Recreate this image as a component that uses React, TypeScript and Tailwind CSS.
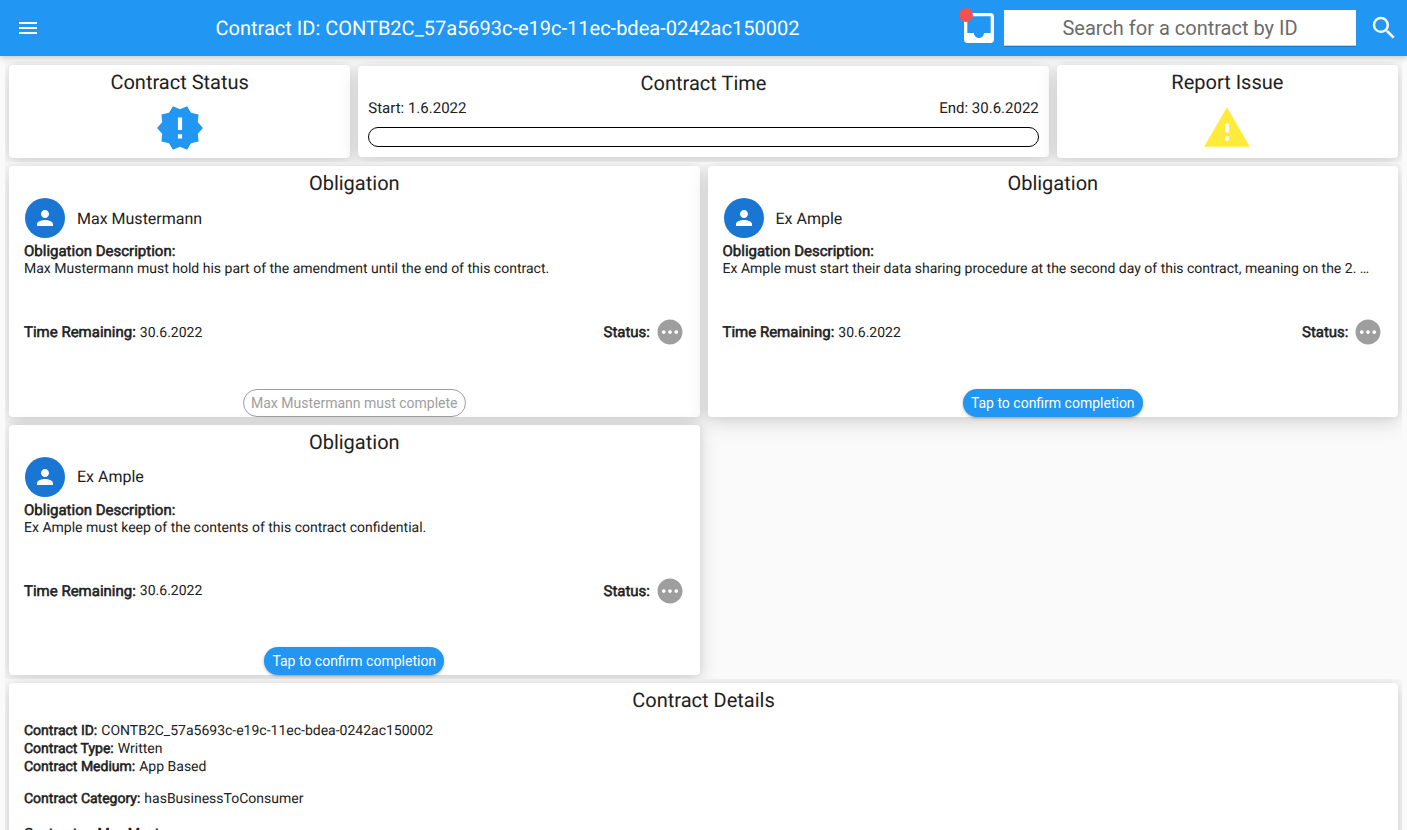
import type { ReactNode } from "react";
import { MdMenu, MdNewReleases, MdPerson, MdPending, MdSearch } from "react-icons/md";

const SHADOW = "shadow-[0_6px_20px_1px_rgba(0,0,0,0.13),0_0_8px_1px_rgba(0,0,0,0.07)]";

function Card({ className = "m-1", children }: { className?: string; children: ReactNode }) {
  return <section className={`rounded-[4px] bg-white ${SHADOW} ${className}`}>{children}</section>;
}

function Title({ children }: { children: ReactNode }) {
  return <h2 className="text-center text-[20px] leading-[24px]">{children}</h2>;
}

function Label({ large, children }: { large?: boolean; children: ReactNode }) {
  return (
    <span className={`[-webkit-text-stroke:0.55px_#212121] ${large ? "text-[15px]" : "text-[14px]"}`}>{children}</span>
  );
}

function Obligation({ name, text, waiting }: { name: string; text: string; waiting?: boolean }) {
  return (
    <Card className="m-1 flex h-[250.6px] flex-col">
      <div className="pt-[5px]">
        <Title>Obligation</Title>
      </div>
      <div className="mt-[3px] flex h-10 items-center gap-3 pl-4">
        <div className="flex size-10 items-center justify-center rounded-full bg-[#1976d2] text-white">
          <MdPerson size={24} />
        </div>
        <span className="pt-px text-[16px]">{name}</span>
      </div>
      <div className="mt-1 h-[70px] px-[15px] leading-[18px]">
        <div className="h-[18px]">
          <Label large>Obligation Description:</Label>
        </div>
        <p className="truncate text-[14px]">{text}</p>
      </div>
      <div className="mt-[5.4px] flex h-[30px] items-center pr-[15px] pl-[15px]">
        <Label large>Time Remaining:</Label>
        <span className="ml-1 pt-[2px] text-[14px]">30.6.2022</span>
        <span className="mr-[4.5px] ml-auto">
          <Label large>Status:</Label>
        </span>
        <MdPending size={30} className="text-[#9e9e9e]" />
      </div>
      <div className="mt-auto flex justify-center">
        {waiting ? (
          <button className="h-7 w-[223px] rounded-full border border-[#9e9e9e] pt-px text-[14px] leading-[25px] text-[#9e9e9e]">
            Max Mustermann must complete
          </button>
        ) : (
          <button className="h-7 w-[180px] rounded-full bg-[#2196f3] pt-px text-[14px] leading-[27px] text-white shadow-[0_1px_3px_rgba(0,0,0,0.3)]">
            Tap to confirm completion
          </button>
        )}
      </div>
    </Card>
  );
}

function Detail({ label, children }: { label: string; children: ReactNode }) {
  return (
    <div className="flex h-[18px] items-center gap-1">
      <Label>{label}</Label>
      <span className="text-[14px]">{children}</span>
    </div>
  );
}

export default function App() {
  return (
    <div className="flex h-[830px] flex-col overflow-hidden bg-[#fafafa] font-[Roboto,sans-serif] text-[#212121] [text-rendering:geometricPrecision]">
      <header className="relative z-10 flex h-14 shrink-0 items-center bg-[#2196f3] pl-4 text-white shadow-[0_2px_6px_rgba(0,0,0,0.2)]">
        <MdMenu size={24} className="shrink-0" />
        <h1 className="w-[919px] pl-4 text-center text-[20px]">
          Contract ID: CONTB2C_57a5693c-e19c-11ec-bdea-0242ac150002
        </h1>
        <div className="relative size-10 shrink-0">
          <svg viewBox="0 0 24 24" className="size-10" fill="currentColor">
            <path d="M19 3H4.99c-1.11 0-1.98.89-1.98 2L3 19c0 1.1.88 2 1.99 2H19c1.1 0 2-.9 2-2V5c0-1.11-.9-2-2-2zm0 12h-4c0 1.66-1.35 3-3 3s-3-1.34-3-3H4.99V5H19v10z" />
          </svg>
          <span className="absolute top-0 left-0 size-3.5 rounded-full bg-[#ef5350]" />
        </div>
        <input
          className="ml-[5px] h-9 w-[352px] shrink-0 border-b border-[#cfcfcf] bg-white text-center text-[20px] shadow-[0_1px_0_#1c79c3] outline-none placeholder:text-[#6b6b6b]"
          placeholder="Search for a contract by ID"
        />
        <MdSearch size={30} className="ml-[13px] shrink-0" />
      </header>

      <main className="mx-[5px] mt-[5px] flex min-h-0 grow flex-col overflow-hidden">
        <div className="grid h-[101px] shrink-0 grid-cols-[1fr_2fr_1fr] overflow-hidden">
          <Card className="m-1 flex flex-col items-center pt-[5px]">
            <Title>Contract Status</Title>
            <MdNewReleases size={50} className="mt-[9px] text-[#2196f3]" />
          </Card>
          <Card className="mx-1 my-[5px] px-[10px] pt-[5px]">
            <Title>Contract Time</Title>
            <div className="mt-[3px] flex h-5 items-center justify-between text-[15px]">
              <span>Start: 1.6.2022</span>
              <span>End: 30.6.2022</span>
            </div>
            <div className="mt-[9px] h-5 rounded-full border border-black" />
          </Card>
          <Card className="m-1 flex flex-col items-center pt-[5px]">
            <Title>Report Issue</Title>
            <svg viewBox="0 0 24 24" className="mt-[9px] size-[50px]" fill="#ffeb3b">
              <path d="M1 21h22L12 2 1 21zm12-3h-2v-2h2v2zm0-4h-2v-4h2v4z" />
            </svg>
          </Card>
        </div>

        <div className="grid shrink-0 grid-cols-2 overflow-hidden">
          <Obligation
            waiting
            name="Max Mustermann"
            text="Max Mustermann must hold his part of the amendment until the end of this contract."
          />
          <Obligation
            name="Ex Ample"
            text="Ex Ample must start their data sharing procedure at the second day of this contract, meaning on the 2. …"
          />
          <Obligation name="Ex Ample" text="Ex Ample must keep of the contents of this contract confidential." />
        </div>

        <div className="shrink-0 overflow-hidden">
          <Card className="m-1 h-[300px] px-[15px] pt-[5px]">
            <Title>Contract Details</Title>
            <div className="mt-[10.2px]">
              <Detail label="Contract ID:">CONTB2C_57a5693c-e19c-11ec-bdea-0242ac150002</Detail>
              <Detail label="Contract Type:">Written</Detail>
              <Detail label="Contract Medium:">App Based</Detail>
            </div>
            <div className="mt-[14px]">
              <Detail label="Contract Category:">hasBusinessToConsumer</Detail>
            </div>
            <div className="mt-[16.8px]">
              <Detail label="Contractor:">
                <Label>Max Mustermann</Label>
              </Detail>
            </div>
          </Card>
        </div>
      </main>
    </div>
  );
}
